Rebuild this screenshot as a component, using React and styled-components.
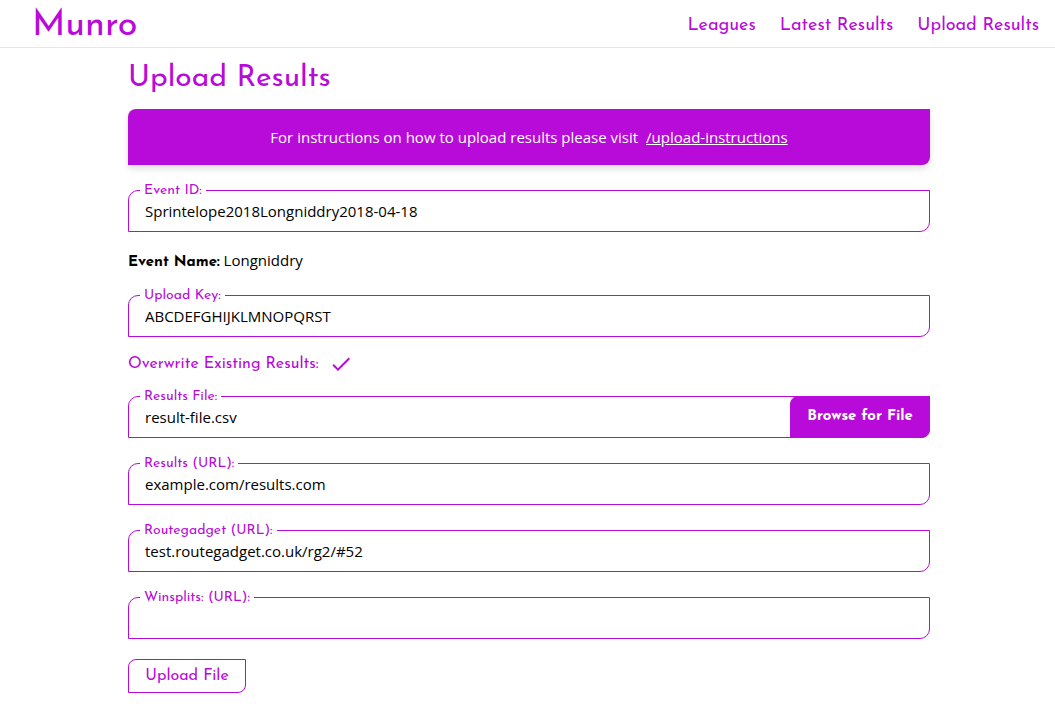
import React, { useState } from "react";
import styled, { createGlobalStyle } from "styled-components";

const purple = "#b80ad8";
const display = '"Josefin Sans", Lato, sans-serif';
const body = '"Segoe UI", "Open Sans", sans-serif';

const GlobalStyle = createGlobalStyle`
  *, *::before, *::after { box-sizing: border-box; }
  body { margin: 0; background: #fff; color: #000; font: 15px/24px ${body}; }
  input, button { font: inherit; color: inherit; }
`;

const Header = styled.header`
  display: flex;
  align-items: center;
  justify-content: space-between;
  height: 48px;
  padding: 4px 16px 0 32px;
  border-bottom: 1px solid #f6defa;
  font-family: ${display};
  color: ${purple};
`;

const Brand = styled.a`
  font-size: 36px;
  line-height: 42px;
  color: inherit;
  text-decoration: none;
`;

const Nav = styled.nav`
  display: flex;
  gap: 24px;
`;

const NavLink = styled.a`
  font-size: 18px;
  color: inherit;
  text-decoration: none;
`;

const Main = styled.main`
  padding: 11px 125px 24px 128px;
`;

const Title = styled.h1`
  margin: 0 0 10px;
  font: 400 30px/40px ${display};
  color: ${purple};
`;

const Banner = styled.p`
  display: flex;
  flex-wrap: wrap;
  justify-content: center;
  gap: 8px;
  margin: 0 0 16px;
  padding: 16px;
  border-radius: 8px 0;
  background: ${purple};
  color: #fff;
  box-shadow: 0 4px 6px rgba(0, 0, 0, 0.12);
`;

const BannerLink = styled.a`
  color: inherit;
`;

const Form = styled.form`
  display: flex;
  flex-direction: column;
`;

const Fieldset = styled.fieldset`
  grid-area: 1 / 1;
  min-width: 0;
  margin: 0;
  padding: 0 16px 10px;
  border: 1px solid ${purple};
  border-radius: 10px 0;
`;

const Legend = styled.legend`
  margin-left: -5px;
  padding: 0 4px;
  font: 400 14px/19px ${display};
  color: ${purple};
`;

const TextInput = styled.input`
  display: block;
  width: 100%;
  height: 21px;
  padding: 0;
  border: 0;
  outline: 0;
  background: transparent;
`;

const FieldSlot = styled.div`
  display: grid;
  margin-bottom: 16px;
`;

const Button = styled.button`
  border: 1px solid ${purple};
  border-radius: 8px 0;
  padding: 0 16px;
  font-family: ${display};
  font-size: 16px;
  cursor: pointer;
`;

const BrowseButton = styled(Button)`
  grid-area: 1 / 1;
  place-self: end;
  height: 42px;
  min-width: 140px;
  font-size: 15px;
  font-weight: 700;
  background: ${purple};
  color: #fff;
`;

const SubmitButton = styled(Button)`
  align-self: flex-start;
  min-width: 118px;
  height: 34px;
  margin-top: 4px;
  background: #fff;
  color: ${purple};
`;

const EventName = styled.p`
  margin: 0 0 11px;
  line-height: 25px;
`;

const EventNameTerm = styled.strong`
  font-family: ${display};
`;

const CheckLabel = styled.label`
  display: flex;
  align-items: center;
  align-self: flex-start;
  gap: 10px;
  margin: -1px 0 11px;
  font: 400 16px/24px ${display};
  color: ${purple};
  cursor: pointer;
`;

const CheckBox = styled.span`
  display: grid;
  width: 24px;
  height: 24px;
`;

const CheckInput = styled.input`
  grid-area: 1 / 1;
  width: 24px;
  height: 24px;
  margin: 0;
  opacity: 0;
`;

const CheckIcon = styled.svg`
  grid-area: 1 / 1;
  fill: ${purple};
  pointer-events: none;
  visibility: ${(p) => (p.$on ? "visible" : "hidden")};
`;

function Field({ id, label, value, children }) {
  return (
    <FieldSlot>
      <Fieldset>
        <Legend>
          <label htmlFor={id}>{label}</label>
        </Legend>
        <TextInput id={id} type="text" defaultValue={value} />
      </Fieldset>
      {children}
    </FieldSlot>
  );
}

export default function App() {
  const [overwrite, setOverwrite] = useState(true);
  return (
    <>
      <GlobalStyle />
      <Header>
        <Brand href="#home">Munro</Brand>
        <Nav>
          <NavLink href="#leagues">Leagues</NavLink>
          <NavLink href="#latest">Latest Results</NavLink>
          <NavLink href="#upload">Upload Results</NavLink>
        </Nav>
      </Header>
      <Main>
        <Title>Upload Results</Title>
        <Banner>
          <span>For instructions on how to upload results please visit</span>
          <BannerLink href="#upload-instructions">/upload-instructions</BannerLink>
        </Banner>
        <Form onSubmit={(e) => e.preventDefault()}>
          <Field id="event-id" label="Event ID:" value="Sprintelope2018Longniddry2018-04-18" />
          <EventName>
            <EventNameTerm>Event Name:</EventNameTerm> Longniddry
          </EventName>
          <Field id="upload-key" label="Upload Key:" value="ABCDEFGHIJKLMNOPQRST" />
          <CheckLabel>
            Overwrite Existing Results:
            <CheckBox>
              <CheckInput
                type="checkbox"
                checked={overwrite}
                onChange={(e) => setOverwrite(e.target.checked)}
              />
              <CheckIcon $on={overwrite} viewBox="0 0 24 24" width="24" height="24" aria-hidden="true">
                <path d="M9 16.17L4.83 12l-1.42 1.41L9 19 21 7l-1.41-1.41z" />
              </CheckIcon>
            </CheckBox>
          </CheckLabel>
          <Field id="results-file" label="Results File:" value="result-file.csv">
            <BrowseButton type="button">Browse for File</BrowseButton>
          </Field>
          <Field id="results-url" label="Results (URL):" value="example.com/results.com" />
          <Field id="routegadget-url" label="Routegadget (URL):" value="test.routegadget.co.uk/rg2/#52" />
          <Field id="winsplits-url" label="Winsplits: (URL):" value="" />
          <SubmitButton type="submit">Upload File</SubmitButton>
        </Form>
      </Main>
    </>
  );
}
